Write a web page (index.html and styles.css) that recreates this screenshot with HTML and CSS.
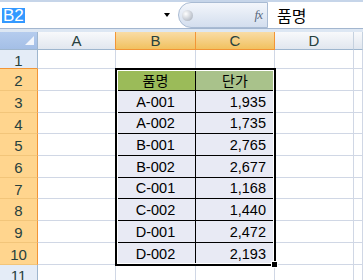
FILE: index.html
```html
<!DOCTYPE html>
<html>
<head>
<meta charset="utf-8">
<link rel="stylesheet" href="styles.css">
</head>
<body>
<div class="topbar">
  <div class="namebox"><span class="nb-sel">B2</span><span class="nb-arrow"></span></div>
  <div class="fxpill"><span class="grip"></span><span class="fx">fx</span></div>
  <div class="fxinput">품명</div>
</div>
<div class="sep"></div>
<div class="stack">
<div class="sheet">
  <div class="corner"><span class="tri"></span></div>
  <div class="ch chA">A</div>
  <div class="ch ch-sel">B</div>
  <div class="ch ch-sel">C</div>
  <div class="ch">D</div>
  <div class="ch chE"></div>

  <div class="rh rh1">1</div><div class="c"></div><div class="c top"></div><div class="c top"></div><div class="c"></div><div class="c"></div>

  <div class="rh rh-sel">2</div><div class="c lft"></div><div class="t hd act">품명</div><div class="t hd shd">단가</div><div class="c"></div><div class="c"></div>
  <div class="rh rh-sel">3</div><div class="c lft"></div><div class="t cd">A-001</div><div class="t num">1,935</div><div class="c"></div><div class="c"></div>
  <div class="rh rh-sel">4</div><div class="c lft"></div><div class="t cd">A-002</div><div class="t num">1,735</div><div class="c"></div><div class="c"></div>
  <div class="rh rh-sel">5</div><div class="c lft"></div><div class="t cd">B-001</div><div class="t num">2,765</div><div class="c"></div><div class="c"></div>
  <div class="rh rh-sel">6</div><div class="c lft"></div><div class="t cd">B-002</div><div class="t num">2,677</div><div class="c"></div><div class="c"></div>
  <div class="rh rh-sel">7</div><div class="c lft"></div><div class="t cd">C-001</div><div class="t num">1,168</div><div class="c"></div><div class="c"></div>
  <div class="rh rh-sel">8</div><div class="c lft"></div><div class="t cd">C-002</div><div class="t num">1,440</div><div class="c"></div><div class="c"></div>
  <div class="rh rh-sel">9</div><div class="c lft"></div><div class="t cd">D-001</div><div class="t num">2,472</div><div class="c"></div><div class="c"></div>
  <div class="rh rh-sel">10</div><div class="c lft"></div><div class="t cd">D-002</div><div class="t num">2,193</div><div class="c"></div><div class="c"></div>
  <div class="rh rh11">11</div><div class="c"></div><div class="c"></div><div class="c"></div><div class="c"></div><div class="c"></div>
</div>
<div class="overlay">
  <div class="selframe"><span class="handle"></span></div>
</div>
</div>
</body>
</html>
```
FILE: styles.css
```css
html, body {
  margin: 0;
  padding: 0;
}
body {
  width: 363px;
  height: 280px;
  overflow: hidden;
  background: #ffffff;
  font-family: "Liberation Sans", "Noto Sans CJK KR", sans-serif;
}

/* formula bar */
.topbar {
  display: flex;
  height: 26px;
  border-top: 2px solid #C6D5E9;
  background: #ffffff;
}
.namebox {
  width: 178px;
  box-sizing: border-box;
  display: flex;
  align-items: center;
  justify-content: space-between;
  padding: 0 8px 0 2px;
}
.nb-sel {
  background: #3399FF;
  color: #ffffff;
  font-size: 17px;
  line-height: 15px;
  padding: 0 1px;
}
.nb-arrow {
  width: 0;
  height: 0;
  border-left: 3px solid transparent;
  border-right: 3px solid transparent;
  border-top: 4px solid #000;
}
.fxpill {
  width: 90px;
  box-sizing: border-box;
  border: 1px solid #A9BBD3;
  border-radius: 13px 0 0 13px;
  background: linear-gradient(#F3F6FB, #D3DEEE);
  display: flex;
  align-items: center;
  justify-content: space-between;
  padding: 0 5px 0 3px;
}
.grip {
  width: 11px;
  height: 11px;
  border-radius: 50%;
  background: radial-gradient(circle at 35% 35%, #ffffff 0%, #C9CED6 55%, #9FA6B2 100%);
}
.fx {
  font-family: "Liberation Serif", serif;
  font-style: italic;
  font-size: 13px;
  color: #5A6A80;
  letter-spacing: -1px;
}
.fxinput {
  flex: 1;
  display: flex;
  align-items: center;
  padding-left: 9px;
  font-size: 16px;
  color: #000;
  font-family: "Noto Sans CJK KR", sans-serif;
}
.sep {
  height: 3px;
  border-top: 1px solid #A3B6CF;
  background: #DDE7F3;
}

/* sheet grid */
.stack {
  display: grid;
  height: 248px;
}
.sheet, .overlay {
  grid-area: 1 / 1;
  display: grid;
  grid-template-columns: 38px 78px 80px 79px 79px 1fr;
  grid-template-rows: 18px 19px 22px 22px 21px 22px 22px 21px 22px 22px 22px 1fr;
}
.overlay {
  pointer-events: none;
}
.sheet {
  font-size: 14.5px;
  color: #000;
}
.sheet > div {
  box-sizing: border-box;
  border-right: 1px solid #D0D7E5;
  border-bottom: 1px solid #D0D7E5;
  display: flex;
  align-items: center;
}
.corner {
  background: linear-gradient(#B5CCEE, #A4BFE6);
  border-right-color: #9EB6CE !important;
  border-bottom-color: #9EB6CE !important;
  position: relative;
}
.tri {
  position: absolute;
  right: 3px;
  bottom: 4px;
  width: 0;
  height: 0;
  border-left: 9px solid transparent;
  border-bottom: 9px solid #F2F6FC;
}
.ch {
  justify-content: center;
  background: linear-gradient(#F8F9FB, #E1E7EF);
  border-right-color: #C5D1DF !important;
  border-bottom-color: #9EB6CE !important;
  color: #27413E;
  font-size: 15px;
}
.chA {
  border-right-color: #F29536 !important;
}
.ch-sel {
  background: linear-gradient(#F9DCA6, #F1C15F);
  border-right-color: #F29536 !important;
  border-bottom-color: #F29536 !important;
}
.rh {
  justify-content: center;
  background: #E4ECF7;
  border-right-color: #9EB6CE !important;
  border-bottom-color: #C5D3E6 !important;
  color: #27413E;
  font-size: 15px;
  padding-top: 2px;
}
.rh1 {
  border-bottom-color: #F29536 !important;
}
.rh-sel {
  background: #FFD58E;
  border-right-color: #F29536 !important;
  border-bottom-color: #F2C57A !important;
}
.top {
  border-bottom-color: #000 !important;
}
.lft {
  border-right-color: #000 !important;
}
.t {
  border-right-color: #000 !important;
  border-bottom-color: #000 !important;
  background: #E8EAF4;
}
.hd {
  justify-content: center;
  font-family: "Noto Sans CJK KR", sans-serif;
  font-size: 14px;
}
.act {
  background: #9BBB59;
}
.shd {
  background: #A9C28B;
}
.cd {
  justify-content: center;
}
.num {
  justify-content: flex-end;
  padding-right: 8px;
}
.selframe {
  grid-column: 3 / 5;
  grid-row: 3 / 12;
  margin: -1px;
  border: 2px solid #000;
  box-shadow: inset 0 0 0 1px #ffffff;
  position: relative;
}
.handle {
  position: absolute;
  right: -4px;
  bottom: -4px;
  width: 5px;
  height: 5px;
  background: #000;
  border: 1px solid #fff;
}
```
